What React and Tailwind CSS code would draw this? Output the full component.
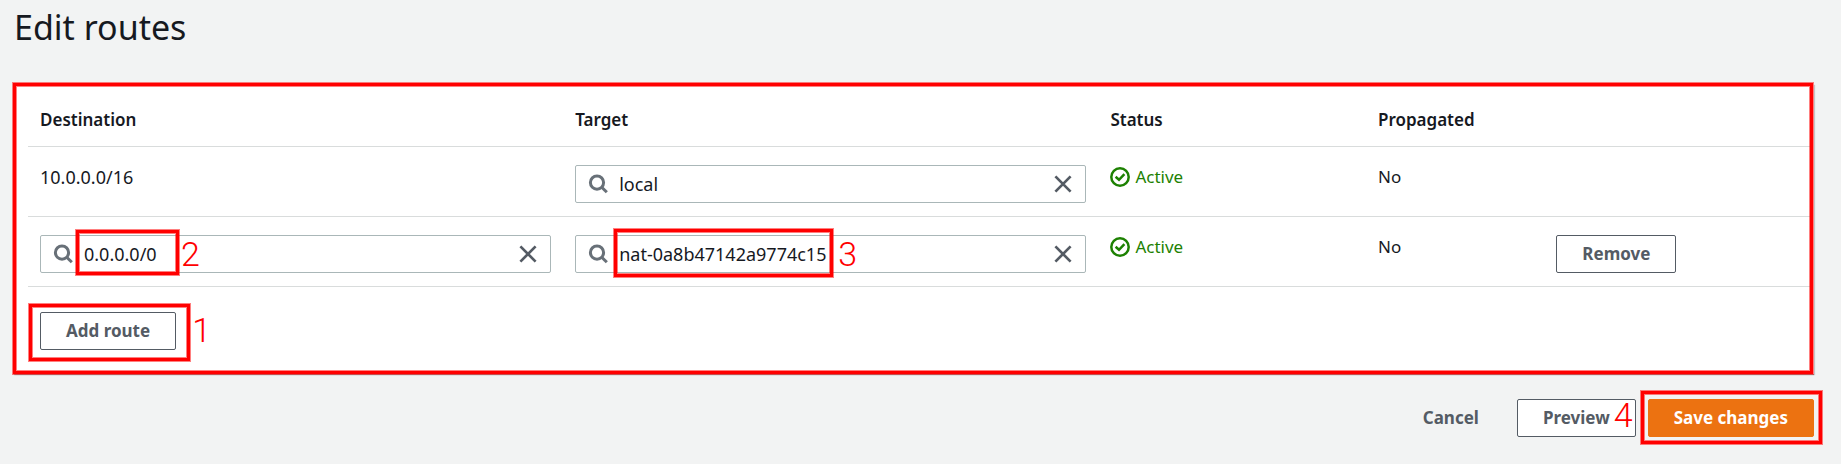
import React from 'react'

const initialRoutes = [
  { destination: '10.0.0.0/16', target: 'local', status: 'Active', propagated: 'No', fixed: true },
  { destination: '0.0.0.0/0', target: 'nat-0a8b47142a9774c15', status: 'Active', propagated: 'No', fixed: false },
]

function SearchIcon() {
  return (
    <svg className="size-5 shrink-0 text-[#687078]" viewBox="0 0 20 20" fill="none" stroke="currentColor" strokeWidth="3" aria-hidden="true">
      <circle cx="9" cy="8.6" r="6.6" />
      <path d="M13.5 13 L18.8 18.3" />
    </svg>
  )
}

function CloseIcon() {
  return (
    <svg className="size-5" viewBox="0 0 20 20" fill="none" stroke="currentColor" strokeWidth="2.7" aria-hidden="true">
      <path d="M2.4 2.4 L17.6 17.6 M17.6 2.4 L2.4 17.6" />
    </svg>
  )
}

function CheckIcon() {
  return (
    <svg className="size-5 shrink-0" viewBox="0 0 20 20" fill="none" stroke="currentColor" strokeWidth="2.5" aria-hidden="true">
      <circle cx="10" cy="10" r="8.7" />
      <path d="M5.6 9.8 L9 12.8 L14.4 7.2" />
    </svg>
  )
}

function Frame({ className }) {
  return (
    <span
      aria-hidden="true"
      className={'pointer-events-none absolute border-3 border-[#ff0000] shadow-[inset_0_0_0_1px_rgba(255,0,0,0.5),0_0_0_1px_rgba(255,0,0,0.5)] ' + className}
    />
  )
}

function StepNumber({ children, className }) {
  return (
    <span className={"pointer-events-none absolute font-['Roboto',sans-serif] text-[34px] leading-[34px] font-light text-[#ff0000] " + className}>
      {children}
    </span>
  )
}

function SearchField({ label, value, children }) {
  return (
    <div className="relative flex h-[38px] items-center rounded-xs border border-[#aab7b8] bg-white pr-3 pl-3">
      <SearchIcon />
      <input
        type="text"
        aria-label={label}
        defaultValue={value}
        className="ml-[11px] h-full min-w-0 flex-1 bg-transparent text-lg text-[#16191f] outline-none"
      />
      <button type="button" aria-label={'Clear ' + label} className="text-[#545b64]">
        <CloseIcon />
      </button>
      {children}
    </div>
  )
}

function Button({ variant = 'normal', children }) {
  const styles = {
    normal: 'border-[#545b64] bg-white text-[#545b64]',
    link: 'border-transparent bg-transparent text-[#545b64]',
    primary: 'border-[#ec7211] bg-[#ec7211] text-white',
  }
  return (
    <button type="button" className={'h-[38px] rounded-xs border px-[25px] text-[17px] leading-[22px] font-bold whitespace-nowrap ' + styles[variant]}>
      {children}
    </button>
  )
}

export default function App() {
  return (
    <main className="min-h-screen bg-[#f2f3f3] pt-[5px] pr-[27px] pb-[26px] pl-[14px] font-['Noto_Sans',sans-serif] text-[17px] leading-6 text-[#16191f]">
      <h1 className="text-[34px] leading-[44px]">Edit routes</h1>

      <section className="relative mt-[35px] bg-white pt-px pr-0.5 pb-6 pl-[14px] shadow-[0_1px_1px_0_rgba(0,28,36,0.3),1px_1px_1px_0_rgba(0,28,36,0.15)]">
        <table className="w-full table-fixed border-collapse text-left">
          <colgroup>
            <col className="w-[30%]" />
            <col className="w-[30%]" />
            <col className="w-[15%]" />
            <col className="w-[10%]" />
            <col className="w-[15%]" />
          </colgroup>
          <thead>
            <tr className="border-b border-[#d9dcdc]">
              {['Destination', 'Target', 'Status', 'Propagated'].map((name) => (
                <th key={name} scope="col" className="px-3 pt-[23px] pb-[14px] font-semibold">
                  {name}
                </th>
              ))}
              <td />
            </tr>
          </thead>
          <tbody>
            {initialRoutes.map((route) => (
              <tr key={route.destination} className="h-[70px] border-b border-[#d9dcdc] align-top">
                <td className="px-3 pt-[18px]">
                  {route.fixed ? (
                    <span className="text-lg leading-6">{route.destination}</span>
                  ) : (
                    <SearchField label="Destination" value={route.destination}>
                      <Frame className="top-[-6px] left-[35px] h-[45px] w-[103px]" />
                      <StepNumber className="top-px left-[140px]">2</StepNumber>
                    </SearchField>
                  )}
                </td>
                <td className="px-3 pt-[18px]">
                  <SearchField label="Target" value={route.target}>
                    {!route.fixed && (
                      <>
                        <Frame className="top-[-7px] left-[38px] h-[48px] w-[219px]" />
                        <StepNumber className="top-px left-[262px]">3</StepNumber>
                      </>
                    )}
                  </SearchField>
                </td>
                <td className="px-3 pt-[18px]">
                  <span className="flex items-center gap-[5px] text-[#1d8102]">
                    <CheckIcon />
                    {route.status}
                  </span>
                </td>
                <td className="px-3 pt-[18px]">{route.propagated}</td>
                <td className="px-3 pt-[18px]">{!route.fixed && <Button>Remove</Button>}</td>
              </tr>
            ))}
          </tbody>
        </table>

        <div className="flex px-3 pt-[25px]">
          <div className="relative">
            <Button>Add route</Button>
            <Frame className="-top-2 -right-[14px] -bottom-[11px] -left-[11px]" />
            <StepNumber className="top-px left-full ml-4">1</StepNumber>
          </div>
        </div>
        <Frame className="-top-px right-px bottom-0 -left-px" />
      </section>

      <div className="mt-[25px] flex flex-wrap justify-end gap-3">
        <Button variant="link">Cancel</Button>
        <div className="relative">
          <Button>Preview</Button>
          <StepNumber className="-top-px right-[3px]">4</StepNumber>
        </div>
        <div className="relative">
          <Button variant="primary">Save changes</Button>
          <Frame className="-top-2 -right-2 -bottom-[7px] -left-[7px]" />
        </div>
      </div>
    </main>
  )
}
